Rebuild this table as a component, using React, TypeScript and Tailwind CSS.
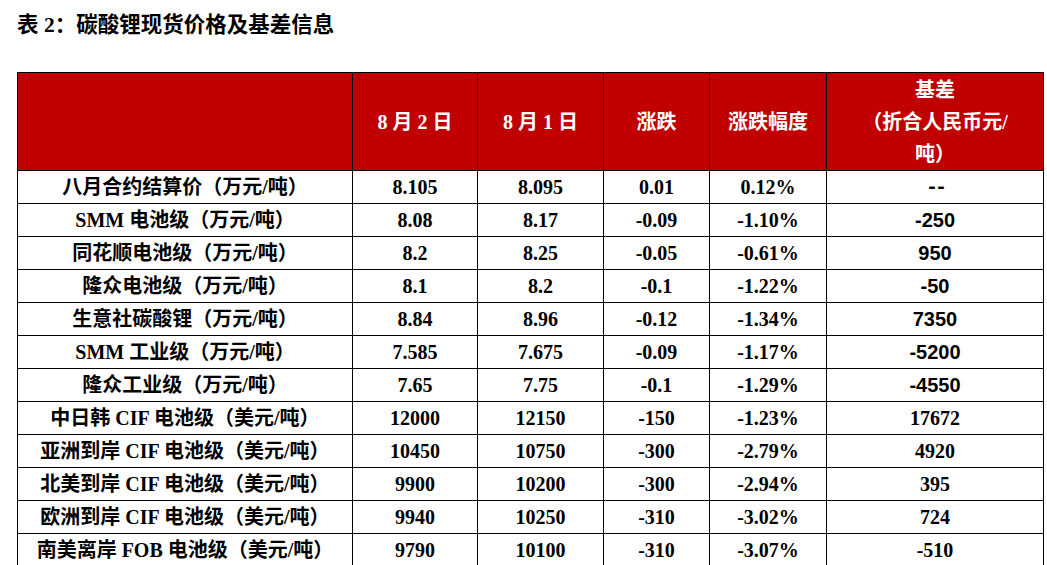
const rows: string[][] = [
  ['八月合约结算价（万元/吨）', '8.105', '8.095', '0.01', '0.12%', '--'],
  ['SMM 电池级（万元/吨）', '8.08', '8.17', '-0.09', '-1.10%', '-250'],
  ['同花顺电池级（万元/吨）', '8.2', '8.25', '-0.05', '-0.61%', '950'],
  ['隆众电池级（万元/吨）', '8.1', '8.2', '-0.1', '-1.22%', '-50'],
  ['生意社碳酸锂（万元/吨）', '8.84', '8.96', '-0.12', '-1.34%', '7350'],
  ['SMM 工业级（万元/吨）', '7.585', '7.675', '-0.09', '-1.17%', '-5200'],
  ['隆众工业级（万元/吨）', '7.65', '7.75', '-0.1', '-1.29%', '-4550'],
  ['中日韩 CIF 电池级（美元/吨）', '12000', '12150', '-150', '-1.23%', '17672'],
  ['亚洲到岸 CIF 电池级（美元/吨）', '10450', '10750', '-300', '-2.79%', '4920'],
  ['北美到岸 CIF 电池级（美元/吨）', '9900', '10200', '-300', '-2.94%', '395'],
  ['欧洲到岸 CIF 电池级（美元/吨）', '9940', '10250', '-310', '-3.02%', '724'],
  ['南美离岸 FOB 电池级（美元/吨）', '9790', '10100', '-310', '-3.07%', '-510'],
]

// basis column switches fonts like the source document does
function basisFont(i: number) {
  if (i === 0) return "font-['Liberation_Mono',monospace] tracking-[-3px]"
  if (i < 7) return "font-['Liberation_Sans','Noto_Sans_CJK_SC',sans-serif]"
  return "font-['Liberation_Serif','Noto_Sans_CJK_SC',serif]"
}

export default function App() {
  return (
    <div className="min-h-screen bg-white px-[17px] pt-[10px] text-black font-['Liberation_Serif','Noto_Sans_CJK_SC',serif]">
      {/* Caption */}
      <h2 className="h-[30px] text-[21.5px] font-bold leading-[30px]">表 2：碳酸锂现货价格及基差信息</h2>

      <table className="mt-[32px] w-[1026px] table-fixed border-collapse text-[20px] font-bold">
        <colgroup>
          <col className="w-[335px]" />
          <col className="w-[125px]" />
          <col className="w-[126px]" />
          <col className="w-[106px]" />
          <col className="w-[117px]" />
          <col className="w-[217px]" />
        </colgroup>
        <thead>
          <tr className="h-[98px] bg-[#c00000] text-white">
            <th className="border border-black p-0" />
            <th className="border border-black p-0 font-bold">8 月 2 日</th>
            <th className="border border-black p-0 font-bold">8 月 1 日</th>
            <th className="border border-black p-0 font-bold">涨跌</th>
            <th className="border border-black p-0 font-bold">涨跌幅度</th>
            <th className="border border-black p-0 font-bold leading-[32px]">
              基差
              <br />
              （折合人民币元/
              <br />
              吨）
            </th>
          </tr>
        </thead>
        <tbody>
          {rows.map((r, i) => (
            <tr key={i} className="h-[33px]">
              <td className="border border-black p-0 text-center leading-[31px]">{r[0]}</td>
              <td className="border border-black p-0 text-center leading-[31px]">{r[1]}</td>
              <td className="border border-black p-0 text-center leading-[31px]">{r[2]}</td>
              <td className="border border-black p-0 text-center leading-[31px]">{r[3]}</td>
              <td className="border border-black p-0 text-center leading-[31px]">{r[4]}</td>
              <td className={`border border-black p-0 text-center leading-[31px] ${basisFont(i)}`}>{r[5]}</td>
            </tr>
          ))}
        </tbody>
      </table>
    </div>
  )
}
